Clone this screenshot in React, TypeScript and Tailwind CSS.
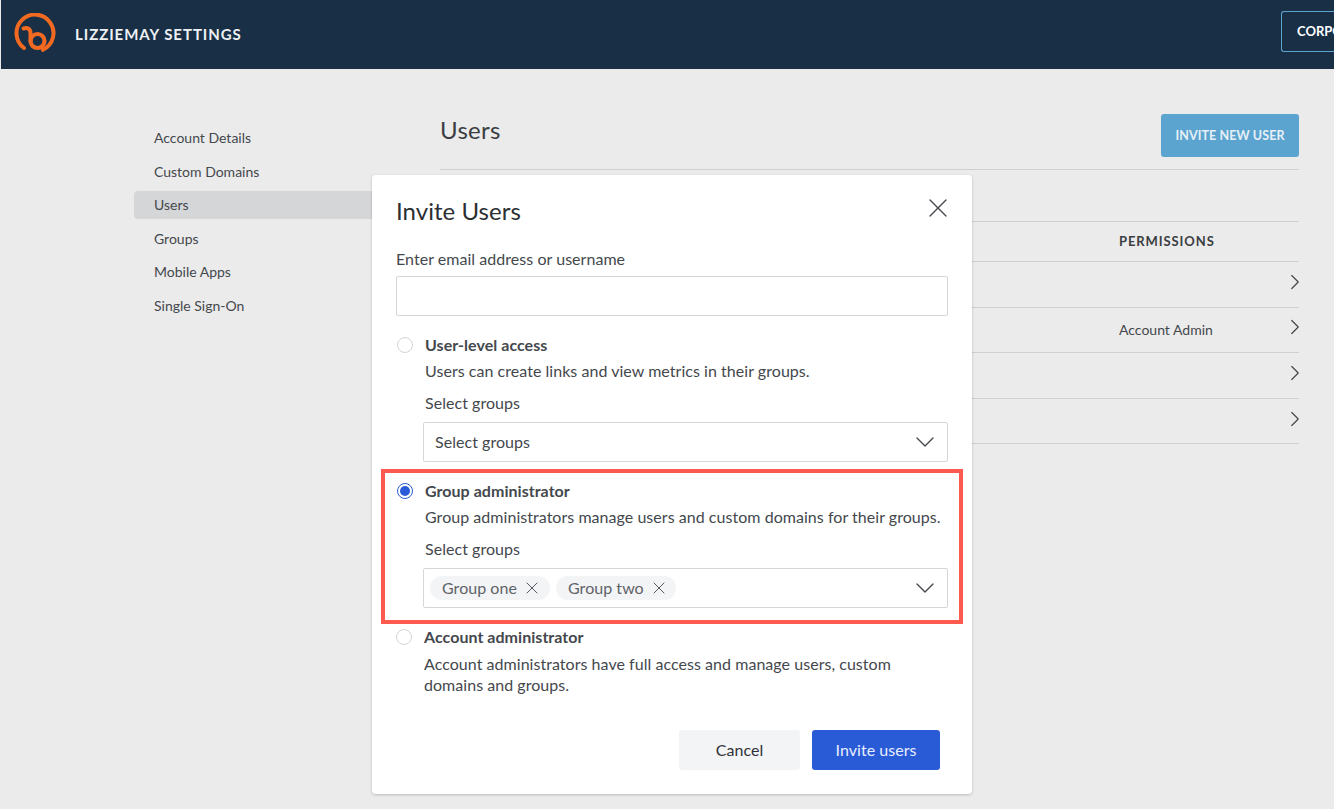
import { ChevronDown, ChevronRight, X } from "lucide-react";

const font = "font-['Lato','Liberation_Sans',sans-serif]";

const sideItems = ["Account Details", "Custom Domains", "Users", "Groups", "Mobile Apps", "Single Sign-On"];
const rows = ["", "Account Admin", "", ""];

function Logo() {
  return (
    <svg width="44" height="44" viewBox="0 0 44 44" fill="none" stroke="#f26a21" strokeWidth="4" strokeLinecap="round">
      <path d="M11 35 A18.5 18.5 0 1 1 30 36.8" />
      <path d="M10.5 15.5 C14.5 14.2 17.5 16 17.5 20 V28" />
      <circle cx="24.5" cy="28" r="7" strokeWidth="4.2" />
    </svg>
  );
}

function Radio({ checked }: { checked?: boolean }) {
  return (
    <span className={`flex size-4 shrink-0 items-center justify-center rounded-full border bg-white ${checked ? "border-[#2a5bd7]" : "border-[#d4d4d4]"}`}>
      {checked && <span className="size-2.5 rounded-full bg-[#2a5bd7]" />}
    </span>
  );
}

function Chip({ text }: { text: string }) {
  return (
    <span className="flex h-6 w-[120px] items-center gap-[5px] rounded-full bg-[#f3f4f6] pl-[12px] text-[16px] text-[#5f6368]">
      {text}
      <X size={20} strokeWidth={1.2} className="text-[#55595e]" />
    </span>
  );
}

function SelectBox({ children }: { children: React.ReactNode }) {
  return (
    <div className="flex h-10 items-center justify-between rounded-[2px] border border-[#d6d6d6] bg-white pr-[6px]">
      {children}
      <ChevronDown size={32} strokeWidth={1} className="text-[#44484d]" />
    </div>
  );
}

function InviteDialog() {
  return (
    <div className="absolute left-[372px] top-[175px] h-[619px] w-[600px] rounded-[4px] bg-white px-6 text-[16px] tracking-[0.04px] text-[#44484d] shadow-[0_1px_3px_rgba(0,0,0,0.2)]">
      <div className="flex h-[72px] items-center justify-between">
        <h2 className="text-[24px] leading-none text-[#2c2f33]">Invite Users</h2>
        <X size={32} strokeWidth={1} className="-mr-[6px] -mt-[6px] text-[#4a4d52]" />
      </div>

      <p className="mt-[2px] leading-5">Enter email address or username</p>
      <div className="mt-[7px] h-10 rounded-[2px] border border-[#d6d6d6]" />

      <div className="mt-[19px] flex items-center gap-[12px] pl-[1px]">
        <Radio />
        <span className="font-bold leading-5">User-level access</span>
      </div>
      <div className="ml-[29px]">
        <p className="mt-[6px] leading-5">Users can create links and view metrics in their groups.</p>
        <p className="mt-3 leading-5">Select groups</p>
        <div className="-ml-[2px] mt-[9px]">
          <SelectBox>
            <span className="pl-[11px]">Select groups</span>
          </SelectBox>
        </div>
      </div>

      {/* red annotation */}
      <div className="-mx-[15px] mt-[7px] h-[155px] border-4 border-[#ff5a50] pl-3 pr-[11px]">
        <div className="mt-[8px] flex items-center gap-[12px]">
          <Radio checked />
          <span className="font-bold leading-5">Group administrator</span>
        </div>
        <div className="ml-[28px]">
          <p className="mt-[6px] whitespace-nowrap leading-5">Group administrators manage users and custom domains for their groups.</p>
          <p className="mt-3 leading-5">Select groups</p>
          <div className="-ml-[2px] mt-[9px]">
            <SelectBox>
              <span className="flex gap-[6px] pl-[6px]">
                <Chip text="Group one" />
                <Chip text="Group two" />
              </span>
            </SelectBox>
          </div>
        </div>
      </div>

      <div className="mt-[3px] flex items-center gap-[12px]">
        <Radio />
        <span className="font-bold leading-5">Account administrator</span>
      </div>
      <p className="ml-[28px] mt-[6px] w-[500px] leading-[21px]">
        Account administrators have full access and manage users, custom domains and groups.
      </p>

      <div className="mt-[35px] flex justify-end gap-3 pr-2">
        <button className="h-10 w-[121px] rounded-[3px] bg-[#f3f4f6] pb-[1px] text-[#2f3236]">Cancel</button>
        <button className="h-10 w-[128px] rounded-[3px] bg-[#2a5bd7] pb-[1px] text-[#e8eefc]">Invite users</button>
      </div>
    </div>
  );
}

export default function App() {
  return (
    <div className={`relative h-[809px] w-[1334px] overflow-hidden bg-[#ebebeb] ${font}`}>
      <header className="ml-[1px] flex h-[69px] items-center overflow-hidden bg-[#182f45] pl-[12px]">
        <Logo />
        <span className="ml-[18px] text-[15px] font-bold tracking-[0.95px] text-[#eef1f4]">LIZZIEMAY SETTINGS</span>
        <div className="-mt-[6px] ml-auto flex h-[41px] w-[53px] items-center overflow-hidden whitespace-nowrap rounded-l-[3px] border border-r-0 border-[#5ba4cf] pl-[15px] text-[13px] font-bold text-white">
          CORPORATE
        </div>
      </header>

      <div className="flex">
        <nav className="ml-[134px] mt-[52px] w-[306px]">
          {sideItems.map((item) => (
            <div key={item} className="flex h-[33.5px] items-center text-[14px] text-[#44484d]">
              <span className={`flex h-[28px] w-[240px] items-center rounded-[4px] pl-5 ${item === "Users" ? "bg-[#d5d6d8]" : ""}`}>{item}</span>
            </div>
          ))}
        </nav>

        <main className="w-[859px] pt-[45px]">
          <div className="flex h-[56px] items-start justify-between border-b border-[#cfcfcf]">
            <h1 className="mt-[1px] text-[24px] leading-[30px] tracking-[0.3px] text-[#3b3e42]">Users</h1>
            <button className="h-[43px] w-[138px] rounded-[3px] bg-[#5ba4cf] pt-[1px] text-[12.5px] font-bold tracking-[0.1px] text-[#e6f0f6]">
              INVITE NEW USER
            </button>
          </div>

          <div className="mt-[51px] flex h-[41px] items-center border-y border-[#cfcfcf] pl-[679px] text-[13px] font-bold tracking-[0.9px] text-[#3b3e42]">
            PERMISSIONS
          </div>
          {rows.map((perm, i) => (
            <div key={i} className="flex h-[45.6px] items-center border-b border-[#cfcfcf] pl-[679px] text-[14px] text-[#44484d]">
              {perm}
              <ChevronRight size={26} strokeWidth={1.1} className="-mr-[9px] -mt-[5px] ml-auto text-[#44484d]" />
            </div>
          ))}
        </main>
      </div>

      <InviteDialog />
    </div>
  );
}
